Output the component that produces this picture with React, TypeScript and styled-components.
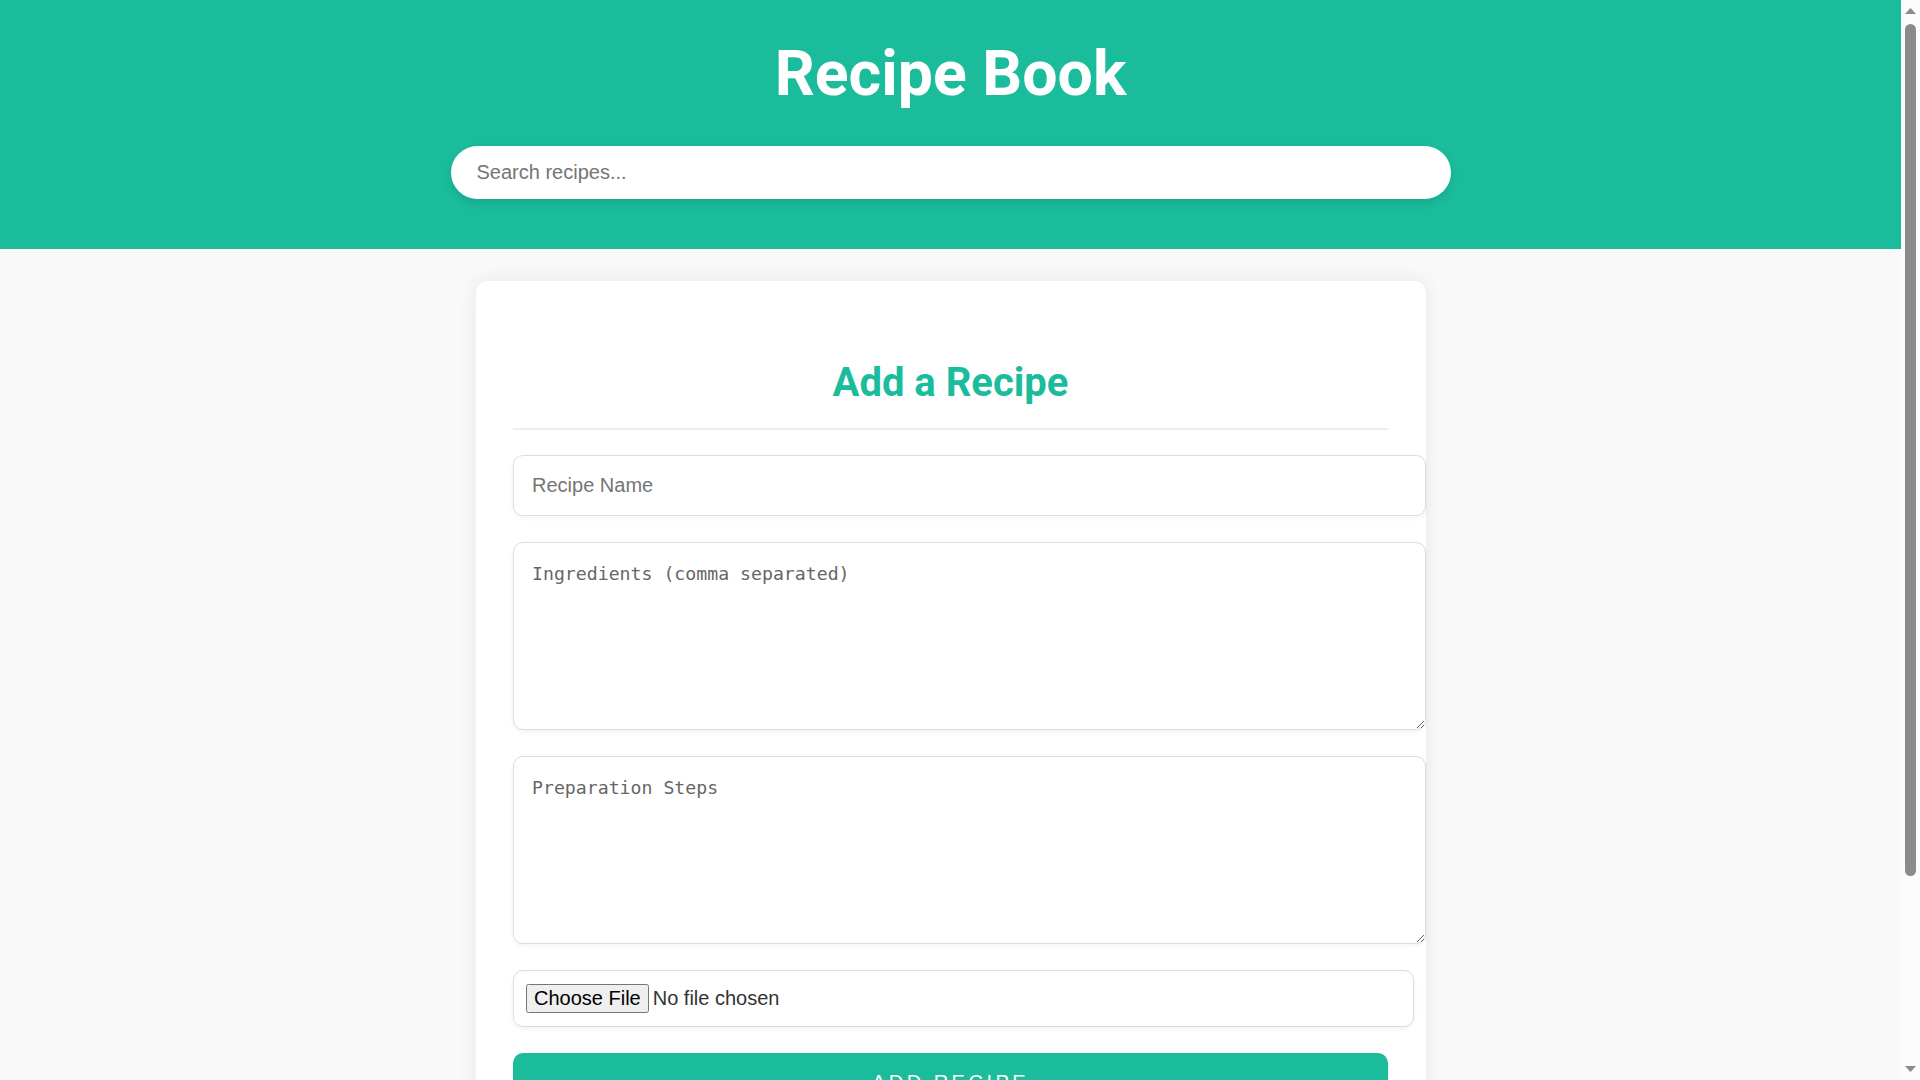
import React from "react";
import styled, { createGlobalStyle } from "styled-components";

const GlobalStyle = createGlobalStyle`
  html, body {
    margin: 0;
    padding: 0;
  }
  body {
    background: #f9f9f9;
    font-family: Roboto, "Liberation Sans", Arial, sans-serif;
    color: #333;
  }
`;

const Page = styled.div`
  margin-right: 19px;
`;

const Header = styled.header`
  background: #1abc9c;
  padding: 36px 20px 50px;
  text-align: center;
`;

const Title = styled.h1`
  margin: 0 0 35px;
  font-family: Roboto, "Liberation Sans", sans-serif;
  font-weight: 700;
  font-size: 62.6px;
  line-height: 75px;
  color: #ffffff;
`;

const SearchInput = styled.input`
  display: block;
  box-sizing: border-box;
  width: 1000px;
  height: 53px;
  margin: 0 auto;
  padding: 15px 26px;
  border: none;
  border-radius: 30px;
  background: #ffffff;
  font-family: "Liberation Sans", Arial, sans-serif;
  font-size: 20px;
  color: #333;
  box-shadow: 0 4px 10px rgba(0, 0, 0, 0.1);
  outline: none;
  &::placeholder {
    color: #757575;
  }
`;

const Main = styled.main`
  padding: 32px 20px 166px;
`;

const Card = styled.section`
  box-sizing: border-box;
  width: 950px;
  margin: 0 auto;
  padding: 37px 37.5px;
  background: #ffffff;
  border-radius: 12px;
  box-shadow: 0 0 20px rgba(0, 0, 0, 0.08);
`;

const CardTitle = styled.h2`
  margin: 41px 0 25px;
  padding-bottom: 22px;
  border-bottom: 2px solid #eeeeee;
  font-family: Roboto, "Liberation Sans", sans-serif;
  font-weight: 700;
  font-size: 40px;
  line-height: 47px;
  color: #1abc9c;
  text-align: center;
`;

const Form = styled.form`
  display: block;
`;

const fieldBase = `
  display: block;
  box-sizing: content-box;
  width: 100%;
  margin: 0 0 26px;
  border: 1px solid #dddddd;
  border-radius: 10px;
  background: #ffffff;
  color: #333;
  box-shadow: 0 2px 5px rgba(0, 0, 0, 0.05);
  outline: none;
`;

const TextInput = styled.input`
  ${fieldBase}
  padding: 18px;
  font-family: "Liberation Sans", Arial, sans-serif;
  font-size: 20px;
  line-height: 23px;
  &::placeholder {
    color: #757575;
  }
`;

const TextArea = styled.textarea`
  ${fieldBase}
  height: 150px;
  padding: 20px 18px 16px;
  font-family: "DejaVu Sans Mono", "Liberation Mono", monospace;
  font-size: 18.2px;
  &::placeholder {
    color: #666666;
  }
`;

const FileInput = styled.input`
  ${fieldBase}
  padding: 13px 12px;
  font-family: "Liberation Sans", Arial, sans-serif;
  font-size: 20px;
  color: #333;
`;

const SubmitButton = styled.button`
  display: block;
  box-sizing: border-box;
  width: 100%;
  padding: 18px;
  border: none;
  border-radius: 10px;
  background: #1abc9c;
  color: #ffffff;
  font-family: "Liberation Sans", Arial, sans-serif;
  font-size: 20px;
  line-height: 23px;
  letter-spacing: 3.5px;
  text-transform: uppercase;
  cursor: pointer;
`;

const ScrollTrack = styled.div`
  position: fixed;
  top: 0;
  right: 0;
  width: 19px;
  height: 100vh;
  background: #fcfcfc;
`;

const ScrollThumb = styled.div`
  position: absolute;
  top: 24px;
  left: 4px;
  width: 11px;
  height: 852px;
  border-radius: 6px;
  background: #8b8b8b;
`;

const ScrollArrow = styled.svg<{ $bottom?: boolean }>`
  position: absolute;
  left: 4px;
  width: 11px;
  height: 6px;
  ${(p) => (p.$bottom ? "bottom: 8px;" : "top: 8px;")}
`;

export default function App() {
  return (
    <>
      <GlobalStyle />
      <Page>
        <Header>
          <Title>Recipe Book</Title>
          <SearchInput type="text" placeholder="Search recipes..." />
        </Header>
        <Main>
          <Card>
            <CardTitle>Add a Recipe</CardTitle>
            <Form onSubmit={(e) => e.preventDefault()}>
              <TextInput type="text" placeholder="Recipe Name" />
              <TextArea placeholder="Ingredients (comma separated)" />
              <TextArea placeholder="Preparation Steps" />
              <FileInput type="file" accept="image/*" />
              <SubmitButton type="submit">Add Recipe</SubmitButton>
            </Form>
          </Card>
        </Main>
      </Page>
      <ScrollTrack aria-hidden="true">
        <ScrollArrow viewBox="0 0 11 6">
          <polygon points="5.5,0 11,6 0,6" fill="#8b8b8b" />
        </ScrollArrow>
        <ScrollThumb />
        <ScrollArrow $bottom viewBox="0 0 11 6">
          <polygon points="0,0 11,0 5.5,6" fill="#8b8b8b" />
        </ScrollArrow>
      </ScrollTrack>
    </>
  );
}
